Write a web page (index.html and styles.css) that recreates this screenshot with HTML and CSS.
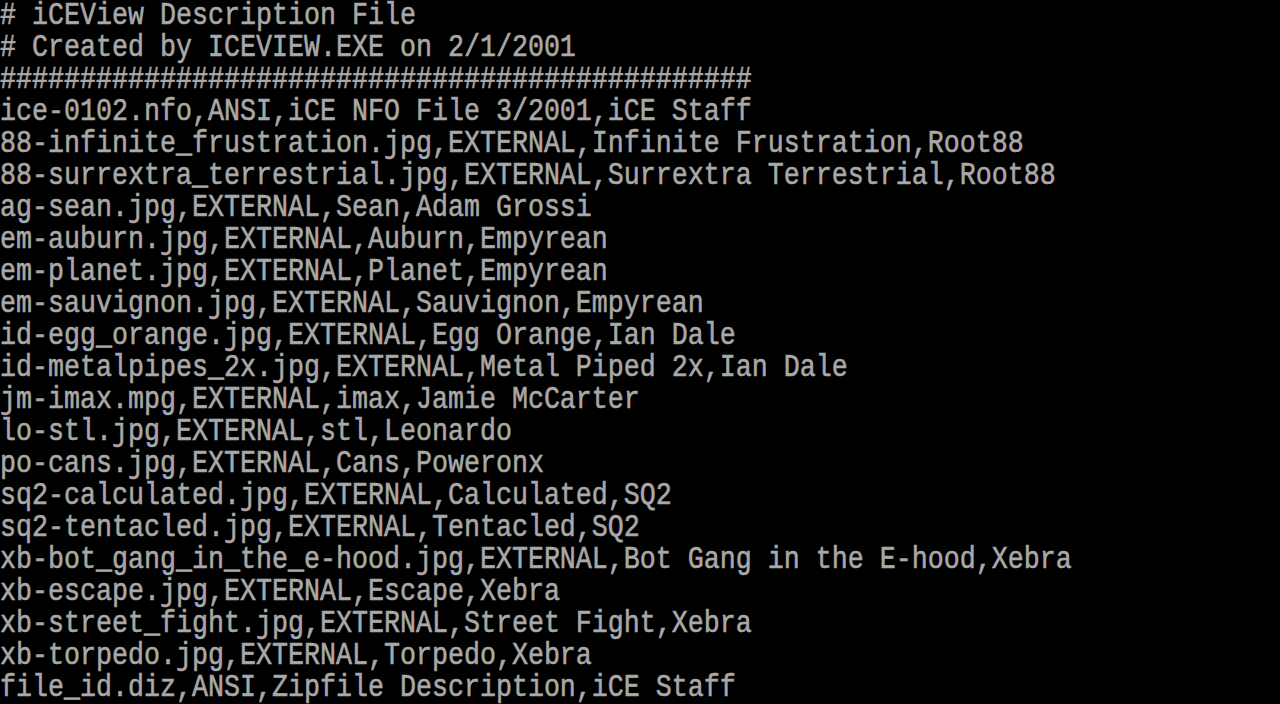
FILE: index.html
```html
<!DOCTYPE html>
<html lang="en">
<head>
  <meta charset="UTF-8" />
  <title>file_id listing</title>
  <link rel="stylesheet" href="styles.css">
</head>
<body>
<pre class="screen"># iCEView Description File
# Created by ICEVIEW.EXE on 2/1/2001
###############################################
ice-0102.nfo,ANSI,iCE NFO File 3/2001,iCE Staff
88-infinite_frustration.jpg,EXTERNAL,Infinite Frustration,Root88
88-surrextra_terrestrial.jpg,EXTERNAL,Surrextra Terrestrial,Root88
ag-sean.jpg,EXTERNAL,Sean,Adam Grossi
em-auburn.jpg,EXTERNAL,Auburn,Empyrean
em-planet.jpg,EXTERNAL,Planet,Empyrean
em-sauvignon.jpg,EXTERNAL,Sauvignon,Empyrean
id-egg_orange.jpg,EXTERNAL,Egg Orange,Ian Dale
id-metalpipes_2x.jpg,EXTERNAL,Metal Piped 2x,Ian Dale
jm-imax.mpg,EXTERNAL,imax,Jamie McCarter
lo-stl.jpg,EXTERNAL,stl,Leonardo
po-cans.jpg,EXTERNAL,Cans,Poweronx
sq2-calculated.jpg,EXTERNAL,Calculated,SQ2
sq2-tentacled.jpg,EXTERNAL,Tentacled,SQ2
xb-bot_gang_in_the_e-hood.jpg,EXTERNAL,Bot Gang in the E-hood,Xebra
xb-escape.jpg,EXTERNAL,Escape,Xebra
xb-street_fight.jpg,EXTERNAL,Street Fight,Xebra
xb-torpedo.jpg,EXTERNAL,Torpedo,Xebra
file_id.diz,ANSI,Zipfile Description,iCE Staff</pre>
</body>
</html>
```

FILE: styles.css
```css
html,
body {
  margin: 0;
  background: #000;
  height: 100%;
  overflow: hidden;
}

/* 80x22 text screen: 16px cells, 32px rows */
.screen {
  margin: 0;
  padding: 0;
  font-family: "Liberation Mono", "DejaVu Sans Mono", monospace;
  font-size: 26.667px;
  line-height: 26.667px;
  color: #a8a8a8;
  -webkit-text-stroke: 0.5px #a8a8a8;
  white-space: pre;
  transform: scaleY(1.2);
  transform-origin: 0 0;
}
```
